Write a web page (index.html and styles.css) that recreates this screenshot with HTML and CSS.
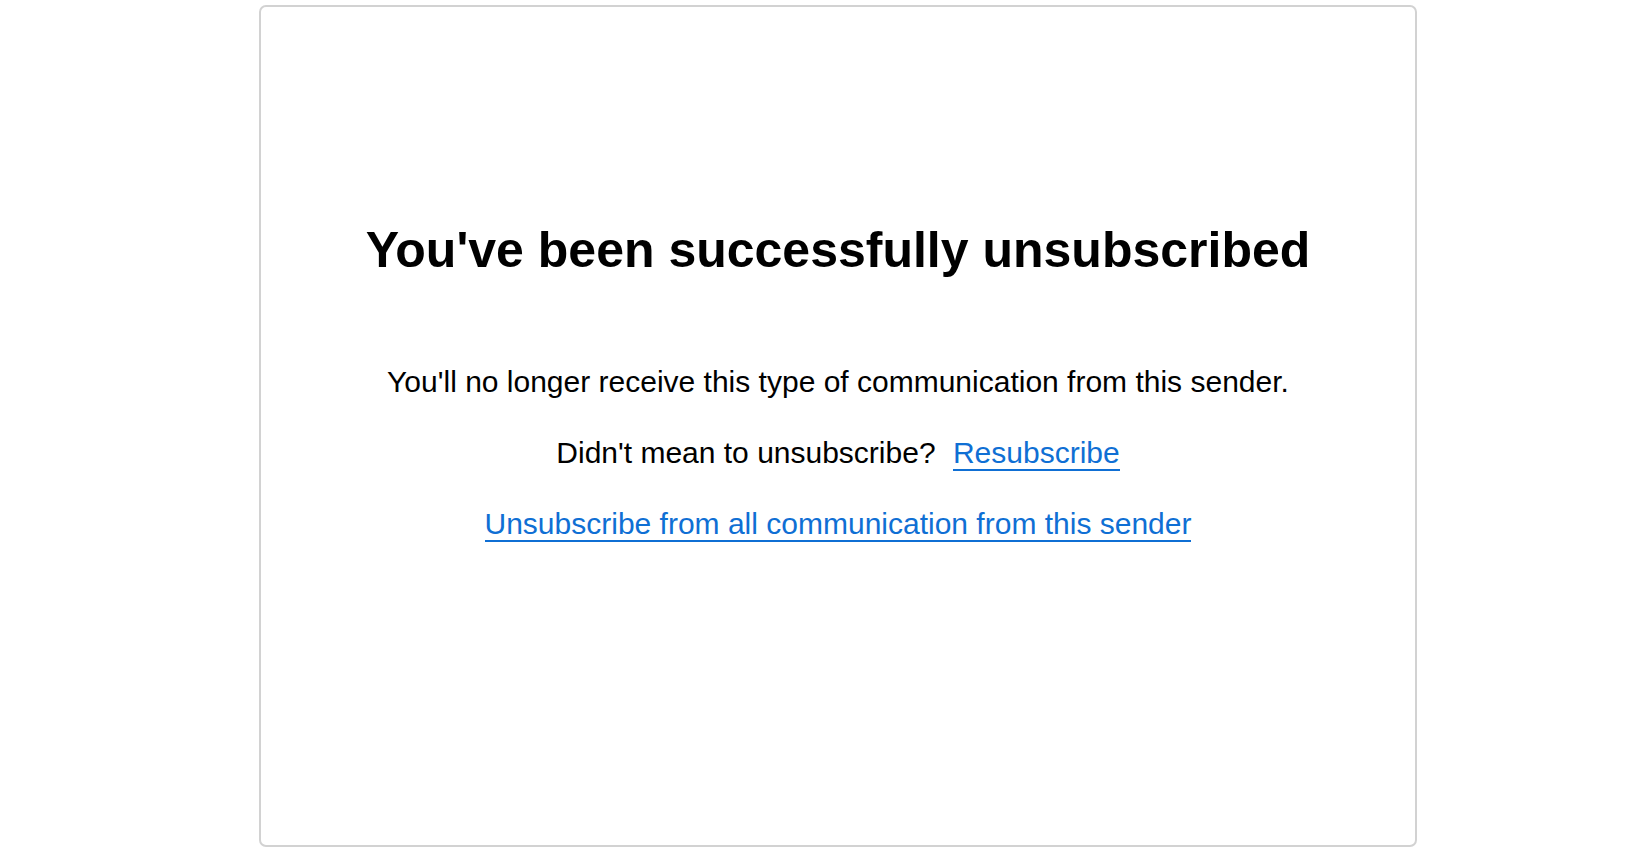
FILE: index.html
```html
<!DOCTYPE html>
<html lang="en">
<head>
<meta charset="utf-8">
<title>Unsubscribed</title>
<link rel="stylesheet" href="styles.css">
</head>
<body>
<main class="card">
  <h1 class="title">You've been successfully unsubscribed</h1>
  <div class="body">
    <p class="line">You'll no longer receive this type of communication from this sender.</p>
    <p class="line">Didn't mean to unsubscribe? <a class="link link-gap" href="#">Resubscribe</a></p>
    <p class="line"><a class="link" href="#">Unsubscribe from all communication from this sender</a></p>
  </div>
</main>
</body>
</html>
```
FILE: styles.css
```css
* { box-sizing: border-box; }
html, body { margin: 0; padding: 0; background: #ffffff; }
body {
  font-family: "Liberation Sans", Arial, Helvetica, sans-serif;
  color: #000;
}
.card {
  margin: 5px 0 0 259px;
  width: 1158px;
  height: 842px;
  border: 2px solid #d2d2d2;
  border-radius: 7px;
  padding-top: 213px;
  display: flex;
  flex-direction: column;
  align-items: center;
  text-align: center;
}
.title {
  margin: 0;
  font-size: 50px;
  line-height: 60px;
  font-weight: 700;
}
.body {
  margin-top: 82px;
  display: flex;
  flex-direction: column;
  align-items: center;
  gap: 31px;
}
.line {
  margin: 0;
  font-size: 30px;
  line-height: 40px;
}
.link {
  color: #0f6fd4;
  text-decoration: none;
  border-bottom: 2px solid #0f6fd4;
}
.link-gap { margin-left: 9px; }
```
